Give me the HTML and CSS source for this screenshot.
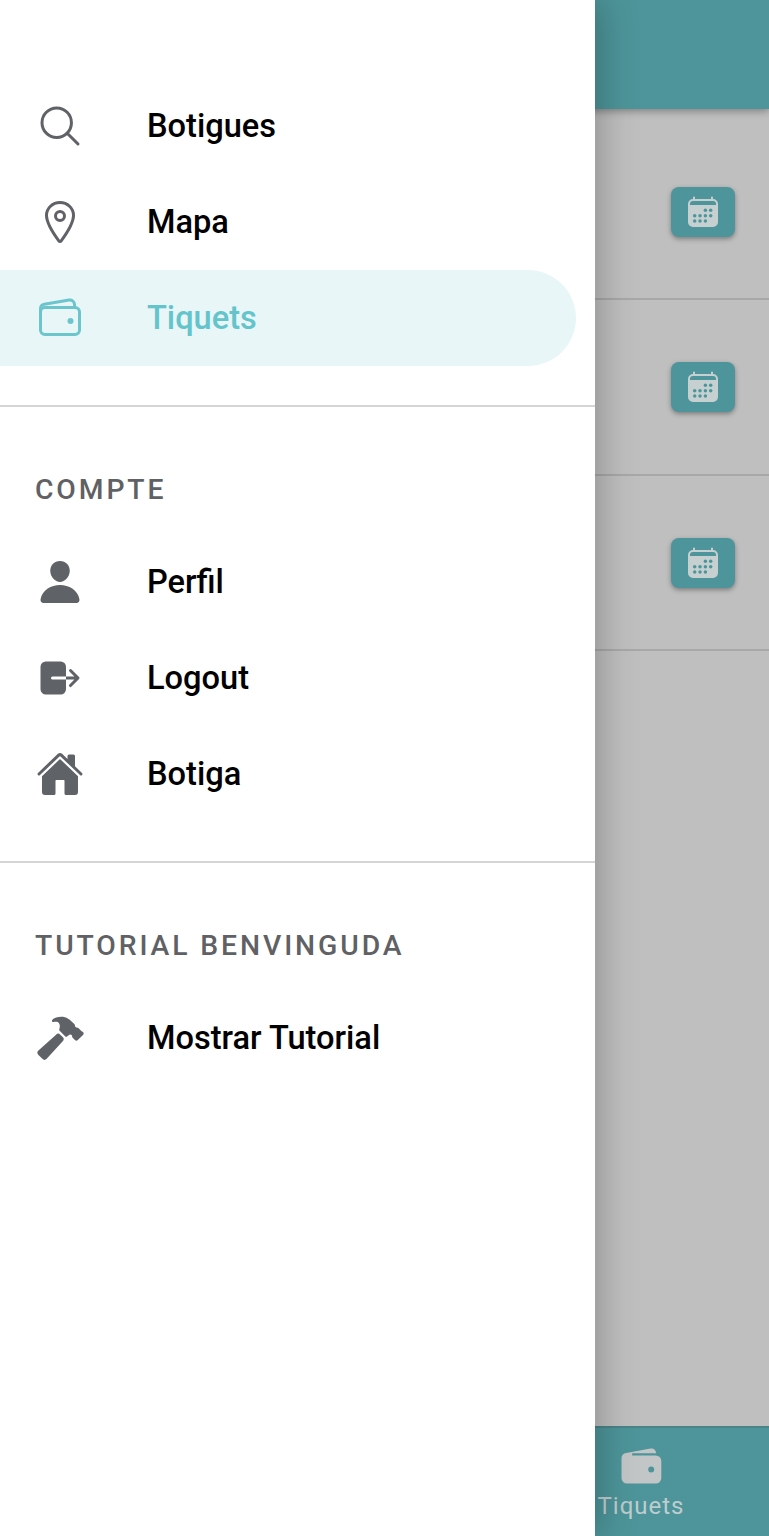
FILE: index.html
```html
<!DOCTYPE html>
<html lang="ca">
<head>
<meta charset="utf-8">
<title>Tiquets</title>
<link rel="stylesheet" href="styles.css">
</head>
<body>
<svg class="defs" aria-hidden="true">
  <symbol id="calendar" viewBox="0 0 36 36">
    <path class="paper" d="M8 5V3.6a1 1 0 0 1 2 0V5h16V3.6a1 1 0 0 1 2 0V5a5 5 0 0 1 5 5v18a5 5 0 0 1-5 5H8a5 5 0 0 1-5-5V10a5 5 0 0 1 5-5z"/>
    <path class="ink" d="M5 11V10a3 3 0 0 1 3-3h20a3 3 0 0 1 3 3v1z"/>
    <g class="ink"><circle cx="20.4" cy="16.3" r="1.75"/><circle cx="25.7" cy="16.3" r="1.75"/><circle cx="9.7" cy="21.7" r="1.75"/><circle cx="15" cy="21.7" r="1.75"/><circle cx="20.4" cy="21.7" r="1.75"/><circle cx="25.7" cy="21.7" r="1.75"/><circle cx="9.7" cy="27" r="1.75"/><circle cx="15" cy="27" r="1.75"/><circle cx="20.4" cy="27" r="1.75"/></g>
  </symbol>
</svg>
<div class="app">
  <main class="page">
    <header class="toolbar"></header>
    <section class="tickets">
      <div class="ticket"><button class="date-button" aria-label="Calendari"><svg><use href="#calendar"/></svg></button></div>
      <div class="ticket"><button class="date-button" aria-label="Calendari"><svg><use href="#calendar"/></svg></button></div>
      <div class="ticket"><button class="date-button" aria-label="Calendari"><svg><use href="#calendar"/></svg></button></div>
    </section>
    <footer class="tabs">
      <div class="tab">
        <svg viewBox="0 0 48 48"><path d="M4.500 15.500a5.500 5.500 0 0 1 4.700-5.400L33.500 5.500c3-.5 5.300 1.200 5.800 4.700H15.200v2.300h23.600a5.500 5.500 0 0 1 5.500 5.500v17a5.500 5.500 0 0 1-5.500 5.500H10A5.500 5.500 0 0 1 4.500 35zM34.200 23.400a3 3 0 1 0 0 6 3 3 0 0 0 0-6z"/></svg>
        <span>Tiquets</span>
      </div>
    </footer>
  </main>
  <nav class="drawer">
    <section class="group">
      <a class="item"><svg class="line" viewBox="0 0 512 512"><circle cx="221" cy="221" r="157"/><path d="M338.300 338.300 448 448"/></svg><span>Botigues</span></a>
      <a class="item"><svg class="line" viewBox="0 0 512 512"><path d="M256 48c-79.500 0-144 61.400-144 137 0 87 96 224.900 131.250 272.500a15.800 15.800 0 0 0 25.500 0C304 409.900 400 272 400 185c0-75.600-64.500-137-144-137z"/><circle cx="256" cy="192" r="48"/></svg><span>Mapa</span></a>
      <a class="item active"><svg class="line" viewBox="0 0 512 512"><rect x="48" y="144" width="416" height="288" rx="48"/><path d="M411.400 144v-30A50 50 0 0 0 352 64.900L88.600 109.900A50 50 0 0 0 48 159v49"/><circle class="dot" cx="368" cy="288" r="32"/></svg><span>Tiquets</span></a>
    </section>
    <section class="group">
      <h2>COMPTE</h2>
      <a class="item"><svg viewBox="0 0 512 512"><path d="M332.640 64.580C313.180 43.570 286 32 256 32c-30.160 0-57.430 11.500-76.800 32.380-19.580 21.110-29.120 49.800-26.880 80.780C156.760 206.280 203.270 256 256 256s99.160-49.710 103.670-110.820c2.270-30.700-7.330-59.330-27.030-80.600zM432 480H80a31 31 0 0 1-24.200-11.130c-6.500-7.770-9.120-18.380-7.180-29.110C57.060 392.940 83.400 353.610 124.800 326c36.780-24.510 83.370-38 131.200-38s94.420 13.500 131.200 38c41.400 27.600 67.740 66.930 76.180 113.750 1.940 10.730-.68 21.340-7.180 29.110A31 31 0 0 1 432 480z"/></svg><span>Perfil</span></a>
      <a class="item"><svg viewBox="0 0 512 512"><path d="M160 256a16 16 0 0 1 16-16h144V136a56 56 0 0 0-56-56H104a56 56 0 0 0-56 56v240a56 56 0 0 0 56 56h160a56 56 0 0 0 56-56V272H176a16 16 0 0 1-16-16zM459.310 244.690l-80-80a16 16 0 0 0-22.620 22.620L409.370 240H320v32h89.370l-52.680 52.690a16 16 0 1 0 22.620 22.620l80-80a16 16 0 0 0 0-22.620z"/></svg><span>Logout</span></a>
      <a class="item"><svg viewBox="0 0 512 512"><path d="M261.560 101.280a8 8 0 0 0-11.060 0L66.400 277.150a8 8 0 0 0-2.470 5.790L63.900 448a32 32 0 0 0 32 32H192a16 16 0 0 0 16-16V328a8 8 0 0 1 8-8h80a8 8 0 0 1 8 8v136a16 16 0 0 0 16 16h96.060a32 32 0 0 0 32-32V282.940a8 8 0 0 0-2.470-5.790z"/><path d="M490.910 244.150l-74.800-71.560V64a16 16 0 0 0-16-16h-48a16 16 0 0 0-16 16v32l-57.920-55.380C272.770 35.140 264.710 32 256 32c-8.680 0-16.720 3.140-22.140 8.630l-212.700 203.500c-6.220 6-7 15.870-1.340 22.370A16 16 0 0 0 43 267.560L250.500 69.280a8 8 0 0 1 11.060 0l207.520 198.280a16 16 0 0 0 22.590-.44c6.140-6.360 5.630-16.860-.76-22.970z"/></svg><span>Botiga</span></a>
    </section>
    <section class="group">
      <h2>TUTORIAL BENVINGUDA</h2>
      <a class="item"><svg viewBox="0 0 512 512"><path d="M285 246l-26-26a32 32 0 0 0-45 0L26 390a32 32 0 0 0 0 46l42 42a32 32 0 0 0 46-1L285 291a32 32 0 0 0 0-45z"/><path d="M489 187l-37-37a24 24 0 0 0-24-6l-12-14c2-8-2-17-8-23l-45-44C327 33 273 18 216 38c-20 7-34 14-44 29-7 12 3 21 16 18 27-5 47-2 56 11 13 19 13 41 4 66a16 16 0 0 0 4 16l58 60a16 16 0 0 0 22 1c8-7 16-13 25-17 9-4 17-3 24 4l5 6a22 22 0 0 0 6 22l23 23a22 22 0 0 0 31 0l60-59a22 22 0 0 0-17-31z"/></svg><span>Mostrar Tutorial</span></a>
    </section>
  </nav>
</div>
</body>
</html>
```
FILE: styles.css
```css
* { box-sizing: border-box; }
body { margin: 0; font-family: Roboto, sans-serif; }
.defs { position: absolute; width: 0; height: 0; }
.app { position: relative; height: 1536px; overflow: hidden; }
.page { display: flex; flex-direction: column; height: 100%; background: #bfbfbf; }
.toolbar { height: 109px; background: #4d959a; box-shadow: 0 2px 8px rgba(0,0,0,.35); }
.tickets { flex: 1; }
.ticket { display: flex; justify-content: flex-end; align-items: center; height: 175.7px; padding: 0 34px 0 0; border-bottom: 2px solid #a8a8a8; }
.ticket:first-child { height: 191px; padding-top: 16px; }
.date-button { display: grid; place-items: center; width: 64px; height: 50px; padding: 0; border: 0; border-radius: 8px; background: #4d959a; box-shadow: 0 2px 5px rgba(0,0,0,.35); }
.date-button svg { width: 36px; height: 36px; }
.paper { fill: #c7d0d1; }
.ink { fill: #4d959a; }
.tabs { height: 110px; padding-left: 583px; border-top: 2px solid #498489; background: #4d959a; }
.tab { display: flex; flex-direction: column; align-items: center; width: 116px; padding-top: 15px; color: #bfcdce; font-size: 24px; line-height: 30px; letter-spacing: 1px; }
.tab svg { width: 48px; height: 48px; fill: #c2c6c6; }
.drawer { position: absolute; inset: 0 auto 0 0; width: 595px; padding-top: 77.6px; background: #fff; box-shadow: 4px 0 36px rgba(0,0,0,.26); }
.group { padding-bottom: 39px; border-bottom: 2px solid #d5d5d5; }
.group:first-child { padding-bottom: 39.4px; }
.group:last-child { border: 0; }
.item { display: flex; align-items: center; width: 576px; height: 96px; padding-left: 35.6px; gap: 63.4px; color: #000; font-size: 32.6px; line-height: 38px; font-weight: 500; border-radius: 0 48px 48px 0; }
.item svg { width: 48px; height: 48px; flex: none; fill: #5f6266; }
.item .line { fill: none; stroke: #5f6266; stroke-width: 32; stroke-linecap: round; stroke-linejoin: round; }
.item.active { background: #e8f6f7; color: #63c4cb; }
.item.active .line { stroke: #6cc5cc; }
.item .dot { fill: #6cc5cc; stroke: none; }
h2 { display: flex; align-items: center; height: 127px; margin: 0; padding: 38px 0 0 35px; color: #5f6164; font-size: 28.3px; font-weight: 500; letter-spacing: 2.9px; }
```
